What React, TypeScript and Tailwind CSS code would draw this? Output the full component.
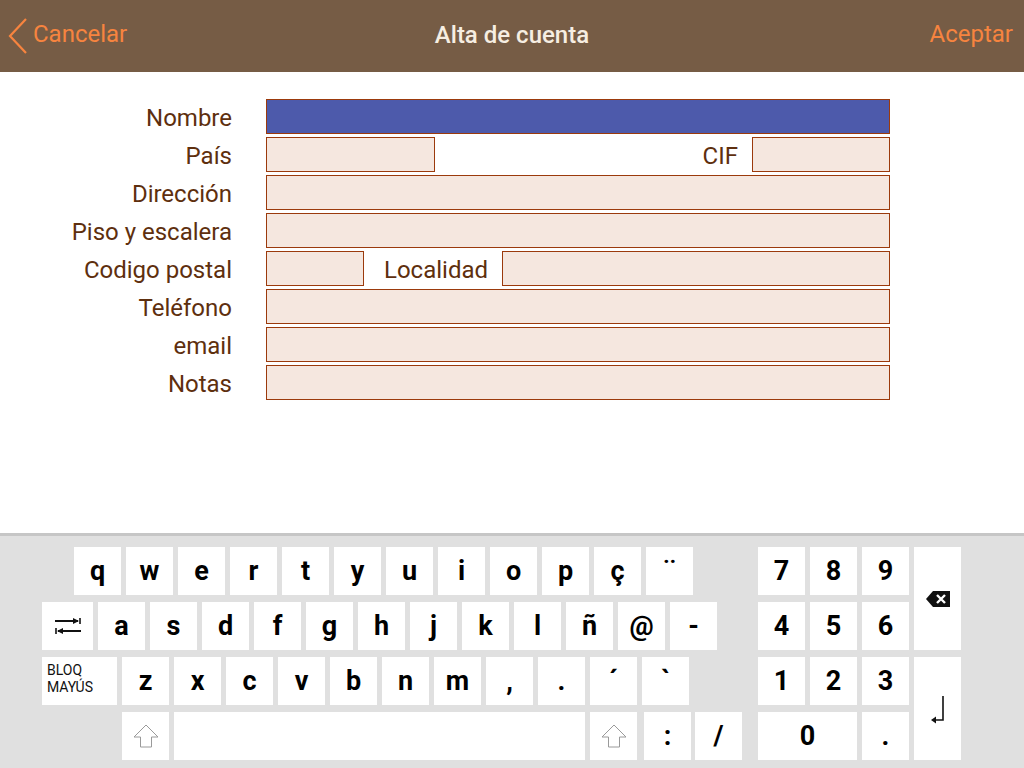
import React from "react";

const font = { fontFamily: "Roboto, 'Noto Sans', sans-serif" };

function BackChevron() {
  return (
    <svg width="22" height="38" viewBox="0 0 22 38" className="shrink-0">
      <path d="M19 2 L3 19 L19 36" fill="none" stroke="#f7843f" strokeWidth="2.2" />
    </svg>
  );
}

function ToggleIcon() {
  return (
    <svg width="28" height="18" viewBox="0 0 28 18">
      <path d="M1 4 H24" stroke="#111" strokeWidth="2" />
      <path d="M19 1 L25 4 L19 7 Z" fill="#111" />
      <path d="M26 1 V7" stroke="#111" strokeWidth="1.6" />
      <path d="M4 14 H27" stroke="#111" strokeWidth="2" />
      <path d="M9 11 L3 14 L9 17 Z" fill="#111" />
      <path d="M2 11 V17" stroke="#111" strokeWidth="1.6" />
    </svg>
  );
}

function BackspaceIcon() {
  return (
    <svg width="24" height="16" viewBox="0 0 24 16">
      <path d="M0 8 L7 0 H24 V16 H7 Z" fill="#111" />
      <path d="M11 4 L19 12 M19 4 L11 12" stroke="#fff" strokeWidth="2.4" />
    </svg>
  );
}

function EnterIcon() {
  return (
    <svg width="16" height="28" viewBox="0 0 16 28">
      <path d="M13 0 V24 H4" fill="none" stroke="#111" strokeWidth="1.6" />
      <path d="M6 20.5 L1 24 L6 27.5 Z" fill="#111" />
    </svg>
  );
}

function ShiftIcon() {
  return (
    <svg width="26" height="24" viewBox="0 0 26 24">
      <path d="M13 1 L25 13 H18.5 V23 H7.5 V13 H1 Z" fill="none" stroke="#9a9a9a" strokeWidth="1" />
    </svg>
  );
}

type KeyProps = { children?: React.ReactNode; className?: string };

function Key({ children, className = "w-[47px]" }: KeyProps) {
  return (
    <div className={`flex h-[48px] items-center justify-center bg-white text-[27px] font-bold text-black ${className}`}>
      {children}
    </div>
  );
}

function Field({ label, children }: { label: string; children: React.ReactNode }) {
  return (
    <div className="flex h-[35px] items-center">
      <div className="w-[232px] pt-[2px] text-right text-[24px] text-[#5e2f0e]">{label}</div>
      <div className="ml-[34px] flex h-full w-[624px] items-center">{children}</div>
    </div>
  );
}

const box = "h-full border border-[#9b3a0c] bg-[#f5e7df]";
const inlineLabel = "pt-[2px] text-[24px] text-[#5e2f0e]";

export default function App() {
  const row1 = ["q", "w", "e", "r", "t", "y", "u", "i", "o", "p", "ç", "¨"];
  const row2 = ["a", "s", "d", "f", "g", "h", "j", "k", "l", "ñ", "@", "-"];
  const row3 = ["z", "x", "c", "v", "b", "n", "m", ",", ".", "´", "`"];

  return (
    <div className="flex h-[768px] w-[1024px] flex-col bg-white" style={font}>
      {/* header */}
      <div className="flex h-[72px] shrink-0 items-center bg-[#765c45] px-[7px]">
        <div className="flex w-[300px] items-center gap-[4px] text-[24px] text-[#f7843f]">
          <BackChevron />
          <span className="-mt-[4px]">Cancelar</span>
        </div>
        <div className="-mt-[2px] flex-1 text-center text-[24px] font-medium text-[#f6eee2]">Alta de cuenta</div>
        <div className="-mt-[5px] w-[300px] pr-[4px] text-right text-[24px] text-[#f7843f]">Aceptar</div>
      </div>

      {/* form */}
      <div className="flex flex-1 flex-col gap-[3px] pt-[27px]">
        <Field label="Nombre">
          <div className="h-full w-full border border-[#9b3a0c] bg-[#4d5aab]" />
        </Field>
        <Field label="País">
          <div className={`${box} w-[169px]`} />
          <div className={`flex-1 pr-[14px] text-right ${inlineLabel}`}>CIF</div>
          <div className={`${box} w-[138px]`} />
        </Field>
        <Field label="Dirección">
          <div className={`${box} w-full`} />
        </Field>
        <Field label="Piso y escalera">
          <div className={`${box} w-full`} />
        </Field>
        <Field label="Codigo postal">
          <div className={`${box} w-[98px]`} />
          <div className={`ml-[20px] w-[104px] ${inlineLabel}`}>Localidad</div>
          <div className={`${box} ml-[14px] flex-1`} />
        </Field>
        <Field label="Teléfono">
          <div className={`${box} w-full`} />
        </Field>
        <Field label="email">
          <div className={`${box} w-full`} />
        </Field>
        <Field label="Notas">
          <div className={`${box} w-full`} />
        </Field>
      </div>

      {/* keyboard */}
      <div className="flex h-[235px] shrink-0 border-t-[3px] border-[#c6c6c6] bg-[#e0e0e0] pt-[11px]">
        <div className="flex w-[758px] flex-col gap-[7px]">
          <div className="ml-[74px] flex gap-[5px]">
            {row1.map((k) => (
              <Key key={k}>{k}</Key>
            ))}
          </div>
          <div className="ml-[42px] flex gap-[5px]">
            <Key className="w-[51px]">
              <ToggleIcon />
            </Key>
            {row2.map((k) => (
              <Key key={k}>{k}</Key>
            ))}
          </div>
          <div className="ml-[42px] flex gap-[5px]">
            <div className="flex h-[48px] w-[75px] flex-col justify-start bg-white pl-[5px] pt-[5px] text-[14px] leading-[17px] text-[#111]">
              <span>BLOQ</span>
              <span>MAYÚS</span>
            </div>
            {row3.map((k) => (
              <Key key={k}>{k}</Key>
            ))}
          </div>
          <div className="ml-[122px] flex">
            <Key>
              <ShiftIcon />
            </Key>
            <Key className="ml-[5px] w-[411px]" />
            <Key className="ml-[5px] w-[47px]">
              <ShiftIcon />
            </Key>
            <Key className="ml-[7px] w-[47px]">:</Key>
            <Key className="ml-[4px] w-[47px]">/</Key>
          </div>
        </div>

        <div className="grid grid-cols-[47px_47px_47px_47px] grid-rows-[48px_48px_48px_48px] gap-x-[5px] gap-y-[7px]">
          <Key>7</Key>
          <Key>8</Key>
          <Key>9</Key>
          <div className="row-span-2 flex items-center justify-center bg-white">
            <BackspaceIcon />
          </div>
          <Key>4</Key>
          <Key>5</Key>
          <Key>6</Key>
          <Key>1</Key>
          <Key>2</Key>
          <Key>3</Key>
          <div className="row-span-2 flex items-center justify-center bg-white pt-[3px]">
            <EnterIcon />
          </div>
          <Key className="col-span-2">0</Key>
          <Key>.</Key>
        </div>
      </div>
    </div>
  );
}
